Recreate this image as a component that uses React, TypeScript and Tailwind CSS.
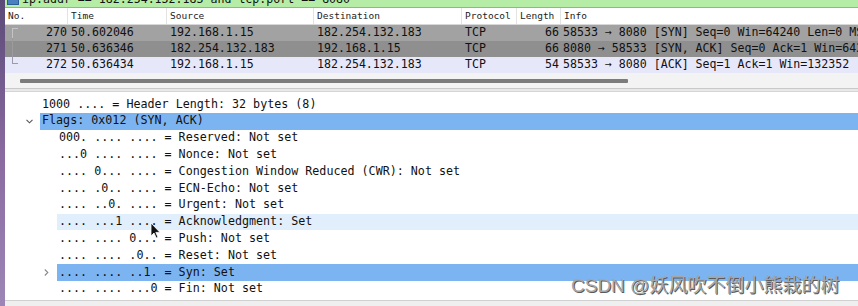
import React from "react";

const mono = { fontFamily: '"DejaVu Sans Mono", "Liberation Mono", monospace' };

type Pkt = { no: string; time: string; src: string; dst: string; proto: string; len: string; info: string; bg: string; tree: "top" | "mid" | "end" };

const packets: Pkt[] = [
  { no: "270", time: "50.602046", src: "192.168.1.15", dst: "182.254.132.183", proto: "TCP", len: "66", info: "58533 → 8080 [SYN] Seq=0 Win=64240 Len=0 MSS=1460", bg: "bg-[#a2a2a2]", tree: "top" },
  { no: "271", time: "50.636346", src: "182.254.132.183", dst: "192.168.1.15", proto: "TCP", len: "66", info: "8080 → 58533 [SYN, ACK] Seq=0 Ack=1 Win=64240", bg: "bg-[#8f8f8f]", tree: "mid" },
  { no: "272", time: "50.636434", src: "192.168.1.15", dst: "182.254.132.183", proto: "TCP", len: "54", info: "58533 → 8080 [ACK] Seq=1 Ack=1 Win=132352", bg: "bg-[#e7e7fa]", tree: "end" },
];

type Line = { text: string; level: 1 | 2; hl?: "strong" | "soft"; arrow?: "down" | "right" };

const lines: Line[] = [
  { text: "1000 .... = Header Length: 32 bytes (8)", level: 1 },
  { text: "Flags: 0x012 (SYN, ACK)", level: 1, hl: "strong", arrow: "down" },
  { text: "000. .... .... = Reserved: Not set", level: 2 },
  { text: "...0 .... .... = Nonce: Not set", level: 2 },
  { text: ".... 0... .... = Congestion Window Reduced (CWR): Not set", level: 2 },
  { text: ".... .0.. .... = ECN-Echo: Not set", level: 2 },
  { text: ".... ..0. .... = Urgent: Not set", level: 2 },
  { text: ".... ...1 .... = Acknowledgment: Set", level: 2, hl: "soft" },
  { text: ".... .... 0... = Push: Not set", level: 2 },
  { text: ".... .... .0.. = Reset: Not set", level: 2 },
  { text: ".... .... ..1. = Syn: Set", level: 2, hl: "strong", arrow: "right" },
  { text: ".... .... ...0 = Fin: Not set", level: 2 },
];

function HeaderCell({ w, children }: { w: string; children: React.ReactNode }) {
  return (
    <div className={`${w} shrink-0 h-full flex items-center pl-[3px] border-r border-[#e3e3e3] text-[9.5px] text-[#222]`}>
      {children}
    </div>
  );
}

export default function App() {
  return (
    <div className="relative flex w-[858px] h-[306px] overflow-hidden bg-white" style={mono}>
      {/* desktop strip on the left */}
      <div className="w-[5px] shrink-0 bg-gradient-to-b from-[#5b4a78] via-[#8a6aa0] to-[#9d86b6]" />

      <div className="flex flex-1 flex-col min-w-0">
        {/* display filter bar, cut off at the top */}
        <div className="h-[8px] shrink-0 overflow-hidden bg-[#b5eca6] border-b border-[#8fb88a] flex">
          <div className="w-[12px] shrink-0 -mt-[6px] ml-[2px] h-[11px] bg-[#4a7fc0] border border-[#2c5d99]" />
          <div className="-mt-[8px] ml-[3px] text-[11.6px] leading-[14px] whitespace-nowrap text-[#111]">
            ip.addr == 182.254.132.183 and tcp.port == 8080
          </div>
        </div>

        {/* packet list header */}
        <div className="h-[17px] shrink-0 flex bg-white border-b border-[#d8d8d8]">
          <HeaderCell w="w-[63px]">No.</HeaderCell>
          <HeaderCell w="w-[99px]">Time</HeaderCell>
          <HeaderCell w="w-[147px]">Source</HeaderCell>
          <HeaderCell w="w-[148px]">Destination</HeaderCell>
          <HeaderCell w="w-[55px]">Protocol</HeaderCell>
          <HeaderCell w="w-[44px]">Length</HeaderCell>
          <div className="flex-1 h-full flex items-center pl-[3px] text-[9.5px] text-[#222]">Info</div>
        </div>

        {/* packet rows */}
        {packets.map((p) => (
          <div key={p.no} className={`h-[16px] shrink-0 flex items-center text-[11.6px] text-[#111] whitespace-nowrap ${p.bg}`}>
            <div className="relative w-[63px] shrink-0 text-right pr-[1px]">
              {p.tree === "top" && <div className="absolute left-[7px] top-[4px] w-[6px] h-[12px] border-l border-t border-[#c4c4c4]" />}
              {p.tree === "mid" && <div className="absolute left-[7px] -top-[2px] h-[18px] border-l border-[#9c9c9c]" />}
              {p.tree === "end" && <div className="absolute left-[7px] -top-[3px] w-[6px] h-[11px] border-l border-b border-[#9a9aa8]" />}
              {p.no}
            </div>
            <div className="w-[99px] shrink-0 pl-[3px]">{p.time}</div>
            <div className="w-[147px] shrink-0 pl-[3px]">{p.src}</div>
            <div className="w-[148px] shrink-0 pl-[3px]">{p.dst}</div>
            <div className="w-[55px] shrink-0 pl-[3px]">{p.proto}</div>
            <div className="w-[42px] shrink-0 text-right">{p.len}</div>
            <div className="flex-1 pl-[4px] overflow-hidden">{p.info}</div>
          </div>
        ))}

        {/* horizontal scrollbar area */}
        <div className="h-[15px] shrink-0 bg-[#f3f3f3] flex items-center">
          <div className="ml-[15px] w-[608px] h-[4px] bg-[#7c7c7c] rounded-[1px]" />
        </div>

        {/* splitter */}
        <div className="h-[4px] shrink-0 bg-[#e8e8e8] border-t border-[#c9c9c9] border-b border-b-[#d6d6d6]" />

        {/* packet details */}
        <div className="flex-1 pt-[4px] bg-white">
          {lines.map((l, i) => (
            <div key={i} className="h-[16.8px] flex items-center text-[11.7px] text-[#111] whitespace-nowrap">
              <div className={`${l.level === 1 ? "w-[35px]" : "w-[52px]"} shrink-0 relative h-full`}>
                {l.arrow === "down" && (
                  <svg className="absolute right-[7px] top-[6px]" width="7" height="5" viewBox="0 0 7 5">
                    <path d="M0.5 0.8 L3.5 3.8 L6.5 0.8" fill="none" stroke="#555" strokeWidth="1.1" />
                  </svg>
                )}
                {l.arrow === "right" && (
                  <svg className="absolute right-[8px] top-[5px]" width="5" height="7" viewBox="0 0 5 7">
                    <path d="M0.8 0.5 L3.8 3.5 L0.8 6.5" fill="none" stroke="#888" strokeWidth="1.1" />
                  </svg>
                )}
              </div>
              <div
                className={`flex-1 h-full flex items-center pl-[2px] ${
                  l.hl === "strong" ? "bg-[#7cb4f2]" : l.hl === "soft" ? "bg-[#e1eefb]" : ""
                }`}
              >
                {l.text}
              </div>
            </div>
          ))}
        </div>

        {/* bottom status edge */}
        <div className="h-[6px] shrink-0 bg-[#efefef] border-t border-[#d0d0d0]" />
      </div>

      {/* watermark */}
      <div
        className="absolute left-[571px] top-[275px] text-[19px] leading-[22px] text-[#a6a6a6] whitespace-nowrap"
        style={{ fontFamily: '"Liberation Sans", "Noto Sans CJK SC", sans-serif', textShadow: "1px 1px 0 #5a5a5a" }}
      >
        CSDN @妖风吹不倒小熊栽的树
      </div>

      {/* mouse cursor */}
      <svg className="absolute left-[150px] top-[222px]" width="11" height="17" viewBox="0 0 11 17">
        <path d="M1 1 L1 14 L4 11 L6.2 16 L8 15.2 L5.8 10.4 L10 10.4 Z" fill="#111" stroke="#fff" strokeWidth="0.8" />
      </svg>
    </div>
  );
}
